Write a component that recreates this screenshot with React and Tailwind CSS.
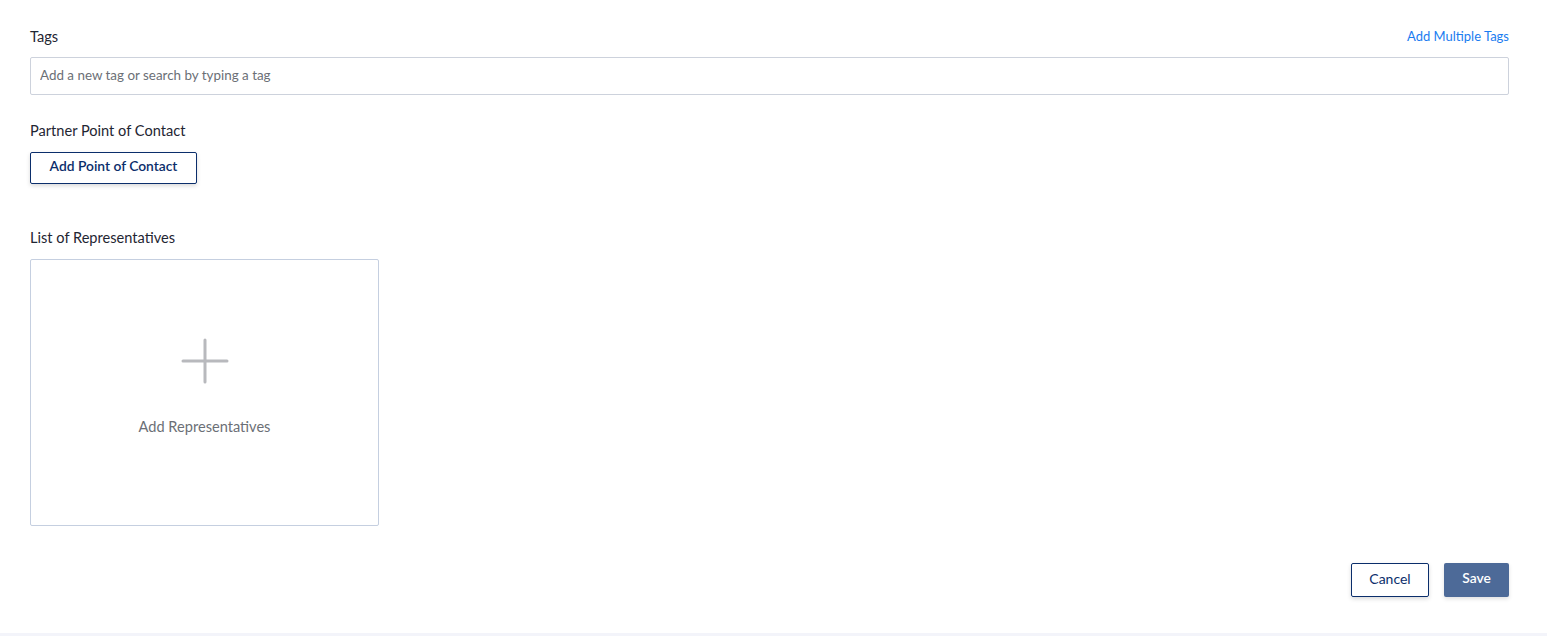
import React, { useState } from 'react';

const App = () => {
  const [tag, setTag] = useState('');

  return (
    <div className="min-h-[636px] bg-white flex flex-col font-['Lato','Noto_Sans',sans-serif] text-[#1f2633]">
      <div className="flex-1 pl-[30px] pr-[38px] pt-[28px]">
        <div className="flex items-center justify-between h-[18px]">
          <label className="text-[14.6px]">Tags</label>
          <button className="text-[13px] text-[#1a7cf0]">Add Multiple Tags</button>
        </div>
        <input
          type="text"
          value={tag}
          onChange={(e) => setTag(e.target.value)}
          placeholder="Add a new tag or search by typing a tag"
          className="mt-[11px] w-full h-[38px] rounded-[2px] border border-[#cdd2dc] px-[9px] pb-[2px] text-[13.4px] placeholder-[#6b6f76] focus:outline-none"
        />

        <div className="mt-[27px] text-[14.6px] h-[18px] leading-[18px]">Partner Point of Contact</div>
        <button className="mt-[12px] w-[167px] h-[32px] pb-[3px] rounded-[2px] border border-[#0b2e6b] text-[#0b2e6b] text-[13.8px] font-semibold shadow-[0_2px_4px_rgba(0,0,0,0.15)]">
          Add Point of Contact
        </button>

        <div className="mt-[45px] text-[14.6px] h-[18px] leading-[18px]">List of Representatives</div>
        <button className="mt-[12px] w-[349px] h-[267px] rounded-[2px] border border-[#c5cfe0] flex flex-col items-center">
          <svg width="48" height="48" viewBox="0 0 48 48" className="mt-[78px]">
            <path d="M24 2v42M2 23h44" stroke="#b8b9bd" strokeWidth="3" strokeLinecap="round" />
          </svg>
          <span className="mt-[30px] text-[14.6px] text-[#6b6f76]">Add Representatives</span>
        </button>

        <div className="mt-[37px] flex justify-end gap-[15px]">
          <button className="w-[78px] h-[34px] pb-[4px] rounded-[2px] border border-[#0b2e6b] text-[#0b2e6b] text-[14px] shadow-[0_2px_4px_rgba(0,0,0,0.15)]">
            Cancel
          </button>
          <button className="w-[65px] h-[34px] pb-[3px] rounded-[2px] bg-[#4d6a98] text-white text-[13.8px] font-semibold shadow-[0_2px_4px_rgba(0,0,0,0.12)]">
            Save
          </button>
        </div>
      </div>
      <div className="h-[3px] bg-[#f3f4fa]" />
    </div>
  );
};

export default App;
